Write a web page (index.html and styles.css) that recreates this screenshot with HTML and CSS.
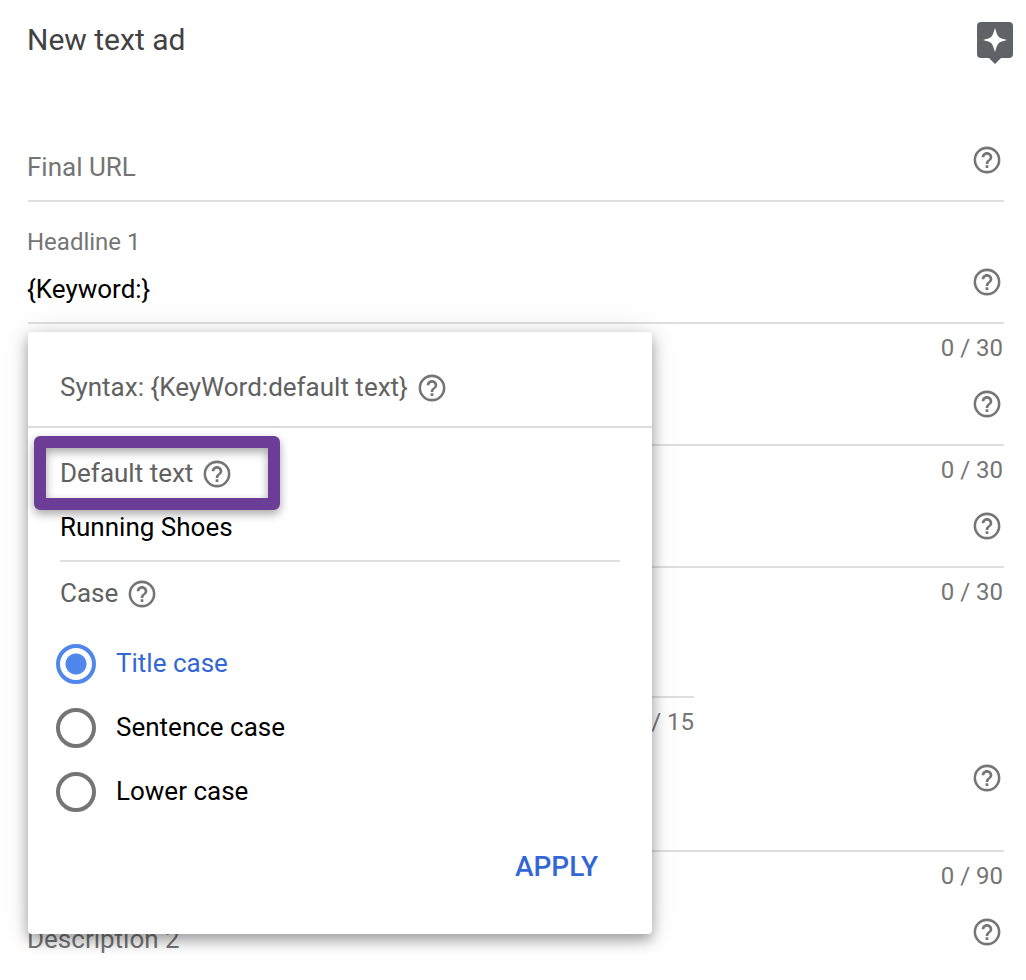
FILE: index.html
```html
<!DOCTYPE html>
<html lang="en">
<head>
<meta charset="utf-8">
<title>New text ad</title>
<link rel="stylesheet" href="styles.css">
</head>
<body>
<svg class="sprite" aria-hidden="true">
  <symbol id="help" viewBox="0 0 24 24"><circle cx="12" cy="12" r="9.100" fill="none" stroke="currentColor" stroke-width="1.900"/><path d="M11 18h2v-2h-2v2zM12 6c-2.210 0-4 1.790-4 4h2c0-1.100.900-2 2-2s2 .900 2 2c0 2-3 1.750-3 5h2c0-2.250 3-2.500 3-5 0-2.210-1.790-4-4-4z"/></symbol>
</svg>
<header class="topbar">
  <h1 class="title">New text ad</h1>
  <button class="assist" type="button" aria-label="Suggestions">
    <svg width="36" height="42" viewBox="0 0 36 42"><path fill="#5f6368" d="M4 0h28a4 4 0 0 1 4 4v28a4 4 0 0 1-4 4h-8l-6 6-6-6H4a4 4 0 0 1-4-4V4a4 4 0 0 1 4-4z"/><path fill="#fff" d="M18 6c1.800 6 2.600 8 4 9 1.200 1.200 3 1.500 8 3-5 1.500-6.800 1.800-8 3-1.400 1-2.200 3-4 9-1.800-6-2.600-8-4-9-1.200-1.200-3-1.500-8-3 5-1.500 6.800-1.800 8-3 1.400-1 2.200-3 4-9z"/></svg>
  </button>
</header>
<main class="form">
  <div class="field">
    <div class="control">
      <input class="text" type="text" aria-label="Final URL" placeholder="Final URL">
      <button class="help" type="button" aria-label="Help: Final URL"><svg class="icon"><use href="#help"/></svg></button>
    </div>
  </div>
  <div class="field anchor">
    <div class="meta"><label class="label" for="h1">Headline 1</label></div>
    <div class="control">
      <input class="text" id="h1" type="text" value="{Keyword:}">
      <button class="help" type="button" aria-label="Help: Headline 1"><svg class="icon"><use href="#help"/></svg></button>
    </div>
    <section class="popover" aria-label="Keyword insertion">
      <div class="syntax"><span class="name">Syntax: {KeyWord:default text}</span>
        <button class="help" type="button" aria-label="Help: Syntax"><svg class="icon"><use href="#help"/></svg></button>
      </div>
      <div class="options">
        <div class="caption marked">
          <label class="name" for="default">Default text</label>
          <button class="help" type="button" aria-label="Help: Default text"><svg class="icon"><use href="#help"/></svg></button>
          <span class="highlight"></span>
        </div>
        <input class="default-input" id="default" type="text" value="Running Shoes">
        <div class="caption case">
          <span class="name" id="case">Case</span>
          <button class="help" type="button" aria-label="Help: Case"><svg class="icon"><use href="#help"/></svg></button>
        </div>
        <div class="choices" role="radiogroup" aria-labelledby="case">
          <label class="choice"><input class="radio" type="radio" name="case" checked><span class="name">Title case</span></label>
          <label class="choice"><input class="radio" type="radio" name="case"><span class="name">Sentence case</span></label>
          <label class="choice"><input class="radio" type="radio" name="case"><span class="name">Lower case</span></label>
        </div>
        <div class="actions"><button class="apply" type="button">APPLY</button></div>
      </div>
    </section>
  </div>
  <div class="field">
    <div class="meta"><span class="count">0 / 30</span></div>
    <div class="control">
      <input class="text" type="text" aria-label="Headline 2">
      <button class="help" type="button" aria-label="Help: Headline 2"><svg class="icon"><use href="#help"/></svg></button>
    </div>
  </div>
  <div class="field">
    <div class="meta"><span class="count">0 / 30</span></div>
    <div class="control">
      <input class="text" type="text" aria-label="Headline 3">
      <button class="help" type="button" aria-label="Help: Headline 3"><svg class="icon"><use href="#help"/></svg></button>
    </div>
  </div>
  <div class="field">
    <div class="meta"><span class="count">0 / 30</span></div>
    <div class="path"><input class="text" type="text" aria-label="Display path"></div>
  </div>
  <div class="field">
    <div class="meta path-meta"><span class="count">0 / 15</span></div>
    <div class="control tall">
      <input class="text" type="text" aria-label="Description 1">
      <button class="help" type="button" aria-label="Help: Description 1"><svg class="icon"><use href="#help"/></svg></button>
    </div>
  </div>
  <div class="field">
    <div class="meta"><span class="count">0 / 90</span></div>
    <div class="control last">
      <input class="text" type="text" aria-label="Description 2" placeholder="Description 2">
      <button class="help" type="button" aria-label="Help: Description 2"><svg class="icon"><use href="#help"/></svg></button>
    </div>
  </div>
</main>
</body>
</html>
```

FILE: styles.css
```css
* { box-sizing: border-box; }
body {
  margin: 0;
  background: #fff;
  color: #000;
  font: 26px/32px Roboto, sans-serif;
}
button, input { font: inherit; color: inherit; }
button { padding: 0; border: 0; background: none; cursor: pointer; }
input { margin: 0; }
.sprite { position: absolute; width: 0; height: 0; }

.topbar {
  display: flex;
  justify-content: space-between;
  align-items: flex-start;
  min-height: 128px;
  padding: 22px 13px 0 27px;
}
.title { margin: 0; font-size: 30px; line-height: 36px; font-weight: 400; color: #424242; }
.assist { display: block; line-height: 0; }

.form { padding: 0 22px 0 28px; }
.anchor { position: relative; }
.meta { display: flex; height: 48px; font-size: 24px; line-height: 24px; color: #757575; }
.label { padding-top: 28px; margin-left: -1px; }
.count { margin-left: auto; padding: 12px 1px 0 0; }
.control {
  display: flex;
  align-items: flex-start;
  min-height: 74px;
  border-bottom: 2px solid #dfdfdf;
}
.tall { min-height: 106px; }
.last { min-height: 80px; border: 0; }
.text {
  flex: 1;
  min-width: 0;
  height: 32px;
  margin: 23px 0 0 -1px;
  padding: 0;
  border: 0;
  outline: 0;
  background: none;
}
.text::placeholder { color: #757575; opacity: 1; }
.help { display: flex; justify-content: center; width: 34px; height: 32px; color: #757575; }
.control .help { margin-top: 16px; }
.icon { width: 32px; height: 32px; fill: currentColor; }
.path { display: flex; width: 70%; max-width: 666px; min-height: 82px; border-bottom: 2px solid #dfdfdf; }
.path-meta { width: 70%; max-width: 667px; }

.popover {
  position: absolute;
  top: calc(100% + 8px);
  left: 0;
  z-index: 1;
  width: 100%;
  max-width: 624px;
  padding-bottom: 46px;
  border-radius: 4px;
  background: #fff;
  box-shadow: 0 0 32px rgba(0, 0, 0, .1), 0 6px 14px rgba(0, 0, 0, .36);
}
.syntax, .caption { display: flex; align-items: center; gap: 7px; color: #616161; }
.syntax { padding: 39px 32px 21px; border-bottom: 2px solid #dadce0; }
.options { padding: 30px 32px 0; }
.name { padding-bottom: 2px; }
.marked { position: relative; width: max-content; }
.highlight {
  position: absolute;
  inset: -22px -46px -20px -26px;
  border: 12px solid #6c3d96;
  border-radius: 6px;
  box-shadow: 0 4px 10px rgba(0, 0, 0, .35), inset 0 4px 10px rgba(0, 0, 0, .35);
  pointer-events: none;
}
.default-input {
  display: block;
  width: 100%;
  height: 72px;
  padding: 4px 0 0;
  border: 0;
  border-bottom: 2px solid #dfdfdf;
  outline: 0;
  background: none;
}
.caption { height: 32px; }
.case { margin-top: 16px; }
.choices { margin: 22px 0 0 -4px; }
.choice { display: flex; align-items: center; gap: 20px; height: 64px; }
.radio {
  appearance: none;
  width: 40px;
  height: 40px;
  border: 4px solid #757575;
  border-radius: 50%;
}
.radio:checked { border-color: #4f87ed; background: radial-gradient(circle, #4f87ed 10px, transparent 11px) border-box; }
.radio:checked + span { color: #3367d6; }
.actions { display: flex; justify-content: flex-end; margin-top: 20px; }
.apply { height: 44px; padding: 2px 22px 0; color: #3367d6; font-size: 28px; font-weight: 500; }
```
